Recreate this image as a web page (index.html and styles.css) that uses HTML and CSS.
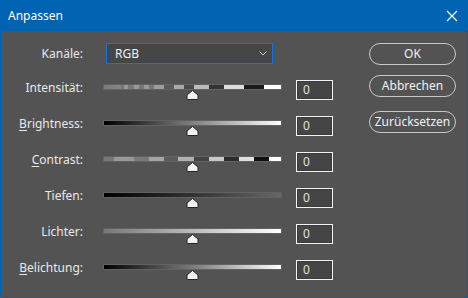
FILE: index.html
```html
<!DOCTYPE html>
<html>
<head>
    <title>Anpassen</title>
    <link rel="stylesheet" href="styles.css">
</head>
<body>
    <div class="dialog">
        <div class="titlebar">
            <span class="title">Anpassen</span>
            <svg class="close" width="12" height="12" viewBox="0 0 12 12">
                <path d="M1 1 L11 11 M11 1 L1 11" stroke="#fff" stroke-width="1.2" fill="none"/>
            </svg>
        </div>
        <div class="content">
            <div class="controls">
                <div class="row channel-row">
                    <label class="label">Kanäle:</label>
                    <div class="select">
                        <span>RGB</span>
                        <svg width="8" height="5" viewBox="0 0 8 5">
                            <path d="M0.5 0.5 L4 4 L7.5 0.5" stroke="#ccc" stroke-width="1" fill="none"/>
                        </svg>
                    </div>
                </div>
                <div class="row">
                    <label class="label">Intensität:</label>
                    <div class="slider">
                        <div class="track track-intensity"></div>
                        <svg class="thumb" width="13" height="10" viewBox="0 0 13 10">
                            <path d="M6.5 0.5 L12 5 L12 8.5 Q12 9.5 11 9.5 L2 9.5 Q1 9.5 1 8.5 L1 5 Z" fill="#f2f2f2" stroke="#222" stroke-width="1"/>
                        </svg>
                    </div>
                    <div class="value">0</div>
                </div>
                <div class="row">
                    <label class="label"><u>B</u>rightness:</label>
                    <div class="slider">
                        <div class="track track-brightness"></div>
                        <svg class="thumb" width="13" height="10" viewBox="0 0 13 10">
                            <path d="M6.5 0.5 L12 5 L12 8.5 Q12 9.5 11 9.5 L2 9.5 Q1 9.5 1 8.5 L1 5 Z" fill="#f2f2f2" stroke="#222" stroke-width="1"/>
                        </svg>
                    </div>
                    <div class="value">0</div>
                </div>
                <div class="row">
                    <label class="label"><u>C</u>ontrast:</label>
                    <div class="slider">
                        <div class="track track-contrast"></div>
                        <svg class="thumb" width="13" height="10" viewBox="0 0 13 10">
                            <path d="M6.5 0.5 L12 5 L12 8.5 Q12 9.5 11 9.5 L2 9.5 Q1 9.5 1 8.5 L1 5 Z" fill="#f2f2f2" stroke="#222" stroke-width="1"/>
                        </svg>
                    </div>
                    <div class="value">0</div>
                </div>
                <div class="row">
                    <label class="label">Tiefen:</label>
                    <div class="slider">
                        <div class="track track-shadows"></div>
                        <svg class="thumb" width="13" height="10" viewBox="0 0 13 10">
                            <path d="M6.5 0.5 L12 5 L12 8.5 Q12 9.5 11 9.5 L2 9.5 Q1 9.5 1 8.5 L1 5 Z" fill="#f2f2f2" stroke="#222" stroke-width="1"/>
                        </svg>
                    </div>
                    <div class="value">0</div>
                </div>
                <div class="row">
                    <label class="label">Lichter:</label>
                    <div class="slider">
                        <div class="track track-highlights"></div>
                        <svg class="thumb" width="13" height="10" viewBox="0 0 13 10">
                            <path d="M6.5 0.5 L12 5 L12 8.5 Q12 9.5 11 9.5 L2 9.5 Q1 9.5 1 8.5 L1 5 Z" fill="#f2f2f2" stroke="#222" stroke-width="1"/>
                        </svg>
                    </div>
                    <div class="value">0</div>
                </div>
                <div class="row">
                    <label class="label"><u>B</u>elichtung:</label>
                    <div class="slider">
                        <div class="track track-exposure"></div>
                        <svg class="thumb" width="13" height="10" viewBox="0 0 13 10">
                            <path d="M6.5 0.5 L12 5 L12 8.5 Q12 9.5 11 9.5 L2 9.5 Q1 9.5 1 8.5 L1 5 Z" fill="#f2f2f2" stroke="#222" stroke-width="1"/>
                        </svg>
                    </div>
                    <div class="value">0</div>
                </div>
            </div>
            <div class="buttons">
                <button class="button">OK</button>
                <button class="button">Abbrechen</button>
                <button class="button button-reset">Zurücksetzen</button>
            </div>
        </div>
    </div>
</body>
</html>
```

FILE: styles.css
```css
html, body {
    margin: 0;
    padding: 0;
}
body {
    font-family: "Noto Sans", "Open Sans", sans-serif;
    font-size: 12px;
    color: #e8e8e8;
    background-color: #535353;
}
.dialog {
    width: 468px;
    height: 298px;
    box-sizing: border-box;
    border: 1px solid #0063b1;
    border-top: none;
    background-color: #535353;
}
.titlebar {
    height: 31px;
    background-color: #0063b1;
    display: flex;
    align-items: center;
    justify-content: space-between;
    padding: 0 9px 0 8px;
    margin: 0 -1px;
}
.title {
    color: #fff;
    font-size: 12px;
}
.close {
    margin-right: 1px;
}
.content {
    display: flex;
    padding-top: 12px;
}
.controls {
    width: 368px;
}
.row {
    display: flex;
    align-items: flex-start;
    height: 20px;
    margin-bottom: 16px;
}
.channel-row {
    height: 21px;
    margin-bottom: 16px;
    align-items: center;
}
.label {
    width: 82px;
    text-align: right;
    line-height: 16px;
    flex-shrink: 0;
}
.channel-row .label {
    line-height: 21px;
}
.label u {
    text-decoration-thickness: 1px;
    text-underline-offset: 2px;
}
.select {
    margin-left: 23px;
    width: 167px;
    height: 21px;
    box-sizing: border-box;
    border: 1px solid #1473e6;
    background-color: #464646;
    display: flex;
    align-items: center;
    justify-content: space-between;
    padding: 0 5px 0 8px;
    color: #f0f0f0;
}
.slider {
    margin-left: 20px;
    width: 179px;
    padding-top: 4px;
}
.track {
    height: 4px;
    border: 1px solid #626262;
}
.thumb {
    display: block;
    margin-left: 83px;
}
.track-intensity {
    background: linear-gradient(to right,
        #7a7a7a 0, #858585 17px,
        #777 17px, #777 20px, #999 20px, #999 24px,
        #777 24px, #777 30px, #999 30px, #999 35px,
        #777 35px, #777 40px, #999 40px, #999 45px,
        #777 45px, #777 50px, #9c9c9c 50px, #9c9c9c 60px,
        #5a5a5a 60px, #5a5a5a 70px, #aaa 70px, #aaa 80px,
        #4a4a4a 80px, #4a4a4a 90px, #bbb 90px, #bbb 105px,
        #333 105px, #333 120px, #ddd 120px, #ddd 140px,
        #1a1a1a 140px, #1a1a1a 160px, #fff 160px);
}
.track-contrast {
    background: linear-gradient(to right,
        #777 0, #777 10px, #999 10px, #999 30px,
        #7a7a7a 30px, #7a7a7a 45px, #a5a5a5 45px, #a5a5a5 60px,
        #5c5c5c 60px, #5c5c5c 74px, #b0b0b0 74px, #b0b0b0 90px,
        #444 90px, #444 105px, #c8c8c8 105px, #c8c8c8 120px,
        #2d2d2d 120px, #2d2d2d 135px, #e0e0e0 135px, #e0e0e0 150px,
        #111 150px, #111 165px, #fff 165px);
}
.track-brightness {
    background: linear-gradient(to right, #000, #fff);
}
.track-shadows {
    background: linear-gradient(to right, #000, #666);
}
.track-highlights {
    background: linear-gradient(to right, #777, #fff);
}
.track-exposure {
    background: linear-gradient(to right, #000, #888 55%, #fff);
}
.value {
    margin-left: 14px;
    width: 37px;
    height: 20px;
    box-sizing: border-box;
    border: 1px solid #f4f4f4;
    box-shadow: inset 0 0 0 1px #3c3c3c;
    background-color: #454545;
    padding-left: 6px;
    line-height: 18px;
    color: #e0e0e0;
}
.buttons {
    display: flex;
    flex-direction: column;
}
.button {
    width: 87px;
    height: 22px;
    box-sizing: border-box;
    border: 1px solid #c8c8c8;
    border-radius: 11px;
    background-color: transparent;
    color: #f0f0f0;
    font-family: "Noto Sans", "Open Sans", sans-serif;
    font-size: 12px;
    padding: 0;
    margin-bottom: 10px;
    line-height: 18px;
}
.button-reset {
    margin-top: 4px;
}
```
